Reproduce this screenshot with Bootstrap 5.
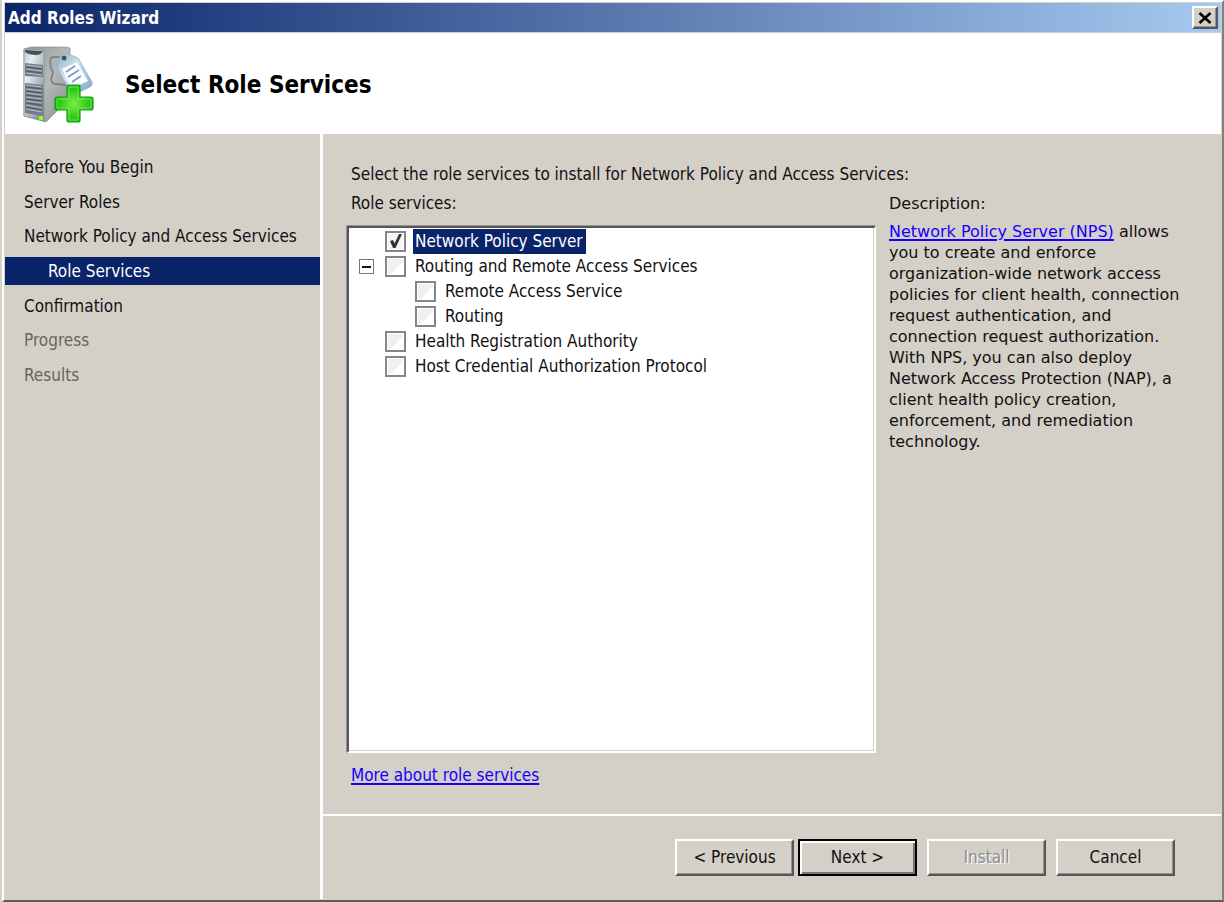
<!DOCTYPE html>
<html lang="en">
<head>
<meta charset="utf-8">
<meta name="viewport" content="width=device-width, initial-scale=1">
<title>Add Roles Wizard</title>
<link href="https://cdn.jsdelivr.net/npm/bootstrap@5.3.0/dist/css/bootstrap.min.css" rel="stylesheet">
<style>
  :root { --face: #d4d0c8; --navy: #0a246a; --link: #1400ff; }
  body { font-family: "DejaVu Sans Condensed", "Noto Sans", sans-serif; font-size: 17px; line-height: 21px; color: #111; background: var(--face); }
  a.wiz-link { color: var(--link); text-decoration-thickness: 2px; text-underline-offset: 2px; }
  .wizard { min-height: 100vh; background: var(--face); border: 2px solid; border-color: #fff #808080 #5c5c60 #fff; margin-left: 2px; padding: 1px; outline: 1px solid var(--face); }
  .title-bar { height: 30px; background: linear-gradient(90deg, #0a246a, #a6caf0); border-bottom: 1px solid var(--face); color: #fff; padding: 0 3px; }
  .title-text { font-size: 17px; font-weight: 700; line-height: 28px; }
  .btn-face { background: var(--face); border: 2px solid; border-color: #fff #55565a #55565a #fff; border-radius: 0; box-shadow: inset -1px -1px #96948f; color: #111; padding: 0; }
  .btn-face:hover, .btn-face:active { background: var(--face); border-color: #fff #55565a #55565a #fff; color: #111; }
  .btn-close-box { width: 26px; height: 23px; line-height: 0; }
  .wiz-header { height: 101px; background: #fff; padding: 2px 0 0 16px; gap: 28px; }
  .wiz-header h1 { font-size: 24px; font-weight: 700; line-height: 32px; color: #000; }
  .side { width: 318px; border-right: 3px solid #fff; }
  .steps { height: 236px; margin-top: 19px; }
  .steps a { height: 28px; line-height: 28px; padding: 0 19px; color: #111; text-decoration: none; white-space: nowrap; }
  .steps a.sub-step { padding-left: 43px; background: var(--navy); color: #fff; }
  .steps a.off { color: #68655f; }
  .content-area { padding: 30px 32px 28px 24px; }
  .tree { background: #fff; border: 2px solid; border-color: #55565a #fff #fff #55565a; box-shadow: inset -1px -1px var(--face), -1px -1px #98958f; margin-top: 12px; padding-top: 1px; }
  .tree-row { height: 25px; padding-left: 36px; gap: 9px; }
  .tree-row.child { padding-left: 66px; }
  .tree-row.parent { padding-left: 10px; }
  .toggle { width: 15px; height: 15px; border: 1px solid #777; background: #fff; padding: 0; margin-right: 2px; }
  .tick { appearance: none; width: 21px; height: 21px; margin: 0; border: 2px solid #85858a; flex: none;
    background: linear-gradient(135deg, #f0f0f0 0 56%, #fff 57%); box-shadow: inset 0 0 0 1px #fff; }
  .tick:checked { background: #f6f6f6 url("data:image/svg+xml,%3Csvg xmlns='http://www.w3.org/2000/svg' viewBox='0 0 17 17'%3E%3Cpath d='M3 8 6 7l1.500 3.500L12 1h3L8.500 15H6z' fill='%23333'/%3E%3C/svg%3E") center/17px no-repeat; }
  .picked { background: var(--navy); color: #fff; line-height: 25px; padding: 0 3px 0 2px; margin-left: -2px; }
  .list-col { width: 529px; }
  .desc-col { flex: 1 1 0; min-width: 0; margin-left: 13px; font-family: "DejaVu Sans", "Noto Sans", sans-serif; font-size: 16px; }
  .desc-body { margin: 7px 0 0; }
  .foot { border-top: 2px solid #fff; padding: 23px 46px 23px 25px; }
  .foot .btn-face { width: 119px; height: 37px; font-size: 17px; line-height: 21px; }
  .foot .btn-default { border-color: #000; box-shadow: inset 2px 2px #fff, inset -2px -2px #77757a; margin: 0 10px 0 4px; }
  .foot .btn-face:disabled { color: #8d8b92; opacity: 1; text-shadow: 1px 1px #fff; background: var(--face); border-color: #fff #55565a #55565a #fff; margin-right: 10px; }
</style>
</head>
<body>
<div class="wizard d-flex flex-column">
  <div class="title-bar d-flex align-items-center justify-content-between">
    <span class="title-text">Add Roles Wizard</span>
    <button class="btn btn-face btn-close-box d-flex align-items-center justify-content-center" type="button" aria-label="Close">
      <svg width="14" height="12" viewBox="0 0 14 12"><path d="M1.500 1 12.500 11M12.500 1 1.500 11" stroke="#000" stroke-width="2.600"/></svg>
    </button>
  </div>

  <header class="wiz-header d-flex align-items-center">
    <svg width="76" height="80" viewBox="0 0 76 80" aria-hidden="true">
      <defs>
        <linearGradient id="front" x1="0" x2="1" y1="0" y2="1"><stop offset="0" stop-color="#b6c6cf"/><stop offset=".25" stop-color="#e8edf0"/><stop offset="1" stop-color="#76818c"/></linearGradient>
        <linearGradient id="flank" x1="0" x2="1" y1="0" y2="1"><stop offset="0" stop-color="#8f9494"/><stop offset=".5" stop-color="#b5b9b9"/><stop offset="1" stop-color="#858a8b"/></linearGradient>
        <linearGradient id="tag" x1="0" x2="1" y1="0" y2="1"><stop offset="0" stop-color="#8eabc0"/><stop offset=".4" stop-color="#cfe2ef"/><stop offset="1" stop-color="#7ba5c4"/></linearGradient>
        <radialGradient id="plus"><stop offset="0" stop-color="#7bee45"/><stop offset="1" stop-color="#13bd0b"/></radialGradient>
      </defs>
      <path d="M3 4 10 2h35l4 1v50L25 77 3 71z" fill="url(#flank)" stroke="#8a9094" stroke-width=".7"/>
      <path d="M3 4 23 5v71L3 71z" fill="url(#front)" stroke="#7f8991" stroke-width=".7"/>
      <path d="M4 5 22 6q-2 4-7 4-7 0-11-3z" fill="#44515b"/>
      <path d="M4 18 22 20v12L4 31zM4 38l18 2v31L4 68z" fill="#737d88"/>
      <path d="M5 20l16 2M5 24l16 2M5 28l16 2M5 40l16 2M5 44l16 2M5 48l16 2M5 52l16 2M5 56l16 2M5 60l16 3M5 64l16 3" stroke="#b8c0c8" stroke-width="1.200"/>
      <path d="M5 22l16 2M5 26l16 2M5 42l16 2M5 46l16 2M5 50l16 2M5 54l16 2M5 58l16 2M5 62l16 3" stroke="#4e5865"/>
      <rect x="18" y="71" width="4" height="4" fill="#8fff1d"/>
      <path d="M43 12H33q-4 0-4 5l1 6q3 4 1 8l-1 3q1 6 6 5l9 1" fill="none" stroke="#7f8485" stroke-width="1.800"/>
      <path d="M36 23 39 11 45 8 57 13 71 37q1 3-2 5L54 49q-4 0-5-3z" fill="url(#tag)" stroke="#8fadc2" stroke-width=".8"/>
      <path d="M41 24 56 17 67 36 50 44z" fill="#f8fcff"/>
      <circle cx="43" cy="13" r="3" fill="#46525a" stroke="#c8d4dc" stroke-width=".8"/>
      <path d="M45 27l9-6M47 32l11-7M51 37l9-6" stroke="#8294c8" stroke-width="1.600"/>
      <path d="M48 40h10q1 0 1 1v11h11q2 0 2 2v9q0 2-2 2H59v10q0 2-2 2h-9q-2 0-2-2V65H36q-2 0-2-2v-9q0-2 2-2h10V42q0-2 2-2z" fill="url(#plus)" stroke="#0d9f0a" stroke-width="1.200"/>
      <path d="M48 42h9v12h13v9H57v12h-9V63H36v-9h12z" fill="none" stroke="#81ee65" stroke-width=".8"/>
    </svg>
    <h1 class="m-0">Select Role Services</h1>
  </header>

  <div class="d-flex flex-grow-1">
    <aside class="side flex-shrink-0">
      <nav class="steps d-flex flex-column justify-content-between" aria-label="Wizard steps">
        <a href="#">Before You Begin</a>
        <a href="#">Server Roles</a>
        <a href="#">Network Policy and Access Services</a>
        <a href="#" class="sub-step" aria-current="step">Role Services</a>
        <a href="#">Confirmation</a>
        <a href="#" class="off">Progress</a>
        <a href="#" class="off">Results</a>
      </nav>
    </aside>

    <main class="d-flex flex-column flex-grow-1">
      <div class="content-area d-flex flex-column flex-grow-1">
        <p class="mb-0 ms-1">Select the role services to install for Network Policy and Access Services:</p>
        <div class="d-flex flex-grow-1 mt-2">
          <section class="list-col d-flex flex-column flex-shrink-0">
            <div class="ps-1">Role services:</div>
            <div class="tree flex-grow-1">
              <div class="tree-row d-flex align-items-center">
                <input class="tick" type="checkbox" id="nps" checked><label class="picked" for="nps">Network Policy Server</label>
              </div>
              <div class="tree-row parent d-flex align-items-center">
                <button class="toggle d-flex align-items-center justify-content-center" type="button" aria-label="Collapse"><svg width="9" height="2" viewBox="0 0 9 2"><path d="M0 1h9" stroke="#111" stroke-width="2"/></svg></button>
                <input class="tick" type="checkbox" id="rras"><label for="rras">Routing and Remote Access Services</label>
              </div>
              <div class="tree-row child d-flex align-items-center">
                <input class="tick" type="checkbox" id="ras"><label for="ras">Remote Access Service</label>
              </div>
              <div class="tree-row child d-flex align-items-center">
                <input class="tick" type="checkbox" id="routing"><label for="routing">Routing</label>
              </div>
              <div class="tree-row d-flex align-items-center">
                <input class="tick" type="checkbox" id="hra"><label for="hra">Health Registration Authority</label>
              </div>
              <div class="tree-row d-flex align-items-center">
                <input class="tick" type="checkbox" id="hcap"><label for="hcap">Host Credential Authorization Protocol</label>
              </div>
            </div>
            <div class="mt-2 pt-1 ps-1"><a class="wiz-link" href="#">More about role services</a></div>
          </section>
          <section class="desc-col">
            <div>Description:</div>
            <p class="desc-body"><a class="wiz-link" href="#">Network Policy Server (NPS)</a> allows you to create and enforce organization-wide network access policies for client health, connection request authentication, and connection request authorization. With NPS, you can also deploy Network Access Protection (NAP), a client health policy creation, enforcement, and remediation technology.</p>
          </section>
        </div>
      </div>
      <div class="foot d-flex justify-content-end">
        <button class="btn btn-face" type="button">&lt; Previous</button>
        <button class="btn btn-face btn-default" type="button">Next &gt;</button>
        <button class="btn btn-face" type="button" disabled>Install</button>
        <button class="btn btn-face" type="button">Cancel</button>
      </div>
    </main>
  </div>
</div>
<script src="https://cdn.jsdelivr.net/npm/bootstrap@5.3.0/dist/js/bootstrap.bundle.min.js"></script>
</body>
</html>
